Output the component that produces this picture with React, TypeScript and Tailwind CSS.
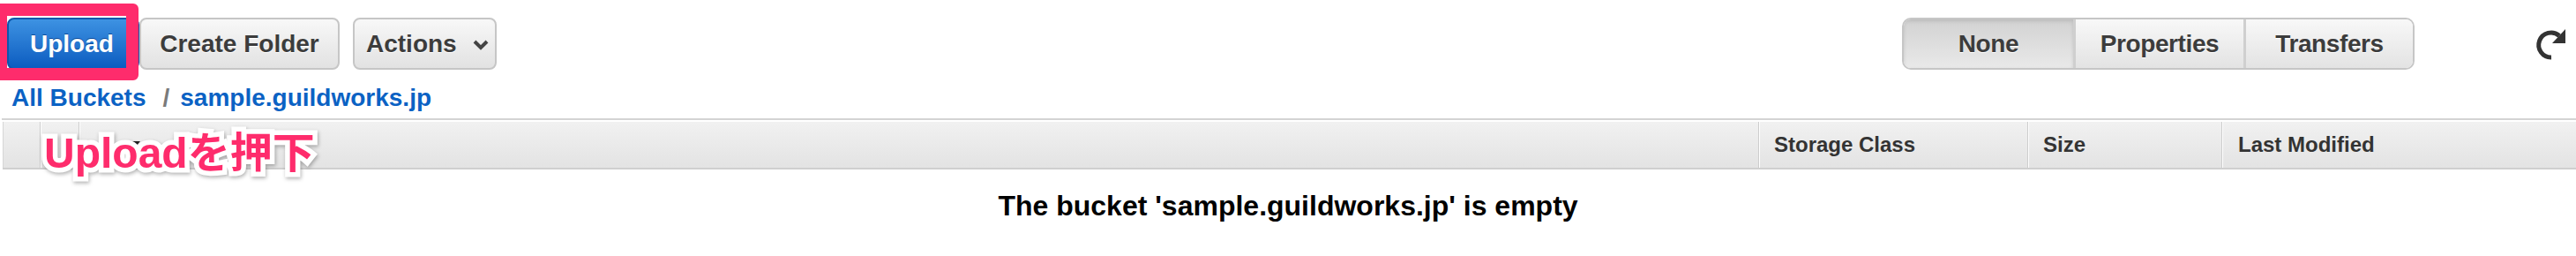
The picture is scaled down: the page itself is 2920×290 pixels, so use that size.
import React from "react";

const btn =
  "h-[59px] rounded-[8px] border-2 border-[#c6c6c6] bg-gradient-to-b from-[#f8f8f8] to-[#e2e2e2] text-[28px] font-bold text-[#3c3c3c] [text-shadow:0_1px_0_#fff] flex items-center justify-center";

export default function App() {
  return (
    <div className="relative w-[2920px] h-[290px] overflow-hidden bg-white font-['Liberation_Sans',Arial,sans-serif]">
      {/* toolbar */}
      <div className="flex items-center pt-[20px] pl-[8px] pr-[8px]">
        <div className="h-[59px] w-[150px] rounded-[8px] border-2 border-[#0d57ab] bg-gradient-to-b from-[#3d92e2] to-[#0a5cc0] text-[28px] font-bold text-white [text-shadow:0_-1px_0_#0a4a99] flex items-center justify-start pl-[24px]">
          Upload
        </div>
        <div className={btn + " w-[227px]"}>Create Folder</div>
        <div className={btn + " w-[163px] ml-[15px] justify-start pl-[13px] gap-[18px]"}>
          <span>Actions</span>
          <svg width="18" height="12" viewBox="0 0 18 12" className="mt-[2px]">
            <polyline points="2,2 9,9 16,2" fill="none" stroke="#444" strokeWidth="4" />
          </svg>
        </div>

        <div className="ml-auto flex h-[59px] rounded-[10px] border-2 border-[#c6c6c6] overflow-hidden text-[28px] tracking-[-0.4px] font-bold text-[#3c3c3c] [text-shadow:0_1px_0_#fff]">
          <div className="w-[192px] flex items-center justify-center bg-gradient-to-b from-[#d2d2d2] to-[#e9e9e9] shadow-[inset_0_2px_4px_rgba(0,0,0,0.12)]">
            None
          </div>
          <div className="w-[193px] border-l-[3px] border-[#cfcfcf] flex items-center justify-center bg-gradient-to-b from-[#f8f8f8] to-[#e3e3e3]">
            Properties
          </div>
          <div className="w-[192px] border-l-[3px] border-[#cfcfcf] flex items-center justify-center bg-gradient-to-b from-[#f8f8f8] to-[#e3e3e3]">
            Transfers
          </div>
        </div>
        <svg width="40" height="40" viewBox="0 0 40 40" className="ml-[135px]">
          <path d="M20 35 A14 14 0 1 1 29 10.5" fill="none" stroke="#333" strokeWidth="5" />
          <polygon points="36,3 36,19 21,19" fill="#333" />
        </svg>
      </div>

      {/* breadcrumb */}
      <div className="mt-[16px] pl-[13px] h-[31px] flex items-center text-[28px] leading-[31px] font-bold">
        <span className="text-[#0b62c4]">All Buckets</span>
        <span className="ml-[19px] mr-[12px] text-[#7a7a7a]">/</span>
        <span className="text-[#0b62c4]">sample.guildworks.jp</span>
      </div>

      {/* separator */}
      <div className="mt-[8px] ml-[2px] h-[2px] bg-[#d4d4d4]" />

      {/* table header */}
      <div className="mt-[2px] ml-[3px] flex h-[54px] border-b-2 border-[#cfcfcf] bg-gradient-to-b from-[#f1f1f1] to-[#e3e3e3] text-[24px] font-bold text-[#333]">
        <div className="w-[42px] border-l border-[#d6d6d6]" />
        <div className="w-[44px] border-l border-[#cdcdcd] shadow-[inset_1px_0_0_#fff]" />
        <div className="flex-1 border-l border-[#cdcdcd] shadow-[inset_1px_0_0_#fff] flex items-center pl-[57px]">
          <svg width="12" height="8" viewBox="0 0 12 8">
            <polygon points="0,0 12,0 6,7" fill="#222" />
          </svg>
        </div>
        <div className="w-[305px] border-l border-[#cdcdcd] shadow-[inset_1px_0_0_#fff] flex items-center pl-[17px]">
          Storage Class
        </div>
        <div className="w-[220px] border-l border-[#cdcdcd] shadow-[inset_1px_0_0_#fff] flex items-center pl-[17px]">
          Size
        </div>
        <div className="w-[402px] border-l border-[#cdcdcd] shadow-[inset_1px_0_0_#fff] flex items-center pl-[18px]">
          Last Modified
        </div>
      </div>

      {/* empty message */}
      <div className="mt-[23px] text-center text-[32px] leading-[36px] font-bold text-black">
        The bucket 'sample.guildworks.jp' is empty
      </div>

      {/* pink highlight overlay */}
      <div className="absolute left-[-6px] top-[4px] w-[163px] h-[87px] rounded-[6px] border-[14px] border-[#fe2c6c]" />

      {/* annotation */}
      <div className="absolute left-[50px] top-[150px] text-[48px] leading-[48px] font-bold text-[#fe2c6c] font-['Liberation_Sans','Noto_Sans_CJK_JP',sans-serif] [-webkit-text-stroke:11px_#fff] [paint-order:stroke_fill] [filter:drop-shadow(1px_2px_2px_rgba(0,0,0,0.3))] whitespace-nowrap">
        Uploadを押下
      </div>
    </div>
  );
}
